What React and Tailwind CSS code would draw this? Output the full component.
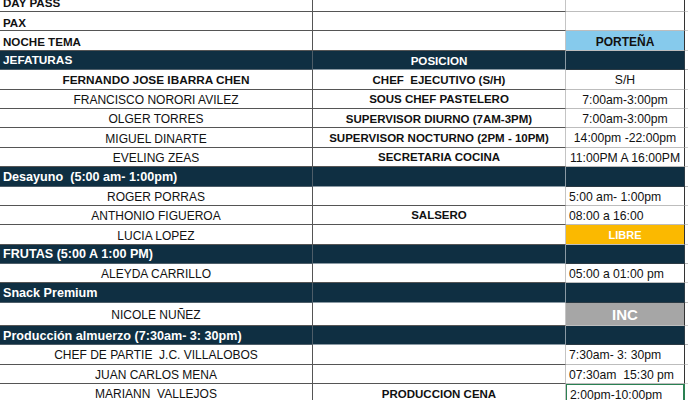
import React from 'react'

const rows = [
  { kind: 'label', a: 'DAY PASS' },
  { kind: 'label', a: 'PAX' },
  { kind: 'label', a: 'NOCHE TEMA', c: 'PORTEÑA', tone: 'sky' },
  { kind: 'band', a: 'JEFATURAS', b: 'POSICION', caps: true },
  { a: 'FERNANDO JOSE IBARRA CHEN', strong: true, b: 'CHEF  EJECUTIVO (S/H)', c: 'S/H', center: true },
  { a: 'FRANCISCO NORORI AVILEZ', b: 'SOUS CHEF PASTELERO', c: '7:00am-3:00pm', center: true },
  { a: 'OLGER TORRES', b: 'SUPERVISOR DIURNO (7AM-3PM)', c: '7:00am-3:00pm', center: true },
  { a: 'MIGUEL DINARTE', b: 'SUPERVISOR NOCTURNO (2PM - 10PM)', c: '14:00pm -22:00pm', center: true },
  { a: 'EVELING ZEAS', b: 'SECRETARIA COCINA', c: '11:00PM A 16:00PM', center: true },
  { kind: 'band', a: 'Desayuno  (5:00 am- 1:00pm)' },
  { a: 'ROGER PORRAS', c: '5:00 am- 1:00pm' },
  { a: 'ANTHONIO FIGUEROA', b: 'SALSERO', c: '08:00 a 16:00' },
  { a: 'LUCIA LOPEZ', c: 'LIBRE', tone: 'gold' },
  { kind: 'band', a: 'FRUTAS (5:00 A 1:00 PM)' },
  { a: 'ALEYDA CARRILLO', c: '05:00 a 01:00 pm' },
  { kind: 'band', a: 'Snack Premium' },
  { a: 'NICOLE NUÑEZ', c: 'INC', tone: 'gray', tall: true },
  { kind: 'band', a: 'Producción almuerzo (7:30am- 3: 30pm)' },
  { a: 'CHEF DE PARTIE  J.C. VILLALOBOS', c: '7:30am- 3: 30pm' },
  { a: 'JUAN CARLOS MENA', c: '07:30am  15:30 pm' },
  { a: 'MARIANN  VALLEJOS', b: 'PRODUCCION CENA', c: '2:00pm-10:00pm', selected: true },
]

function Row({ row }) {
  const h = row.tall ? 'h-[23px]' : 'h-[19.4px]'

  if (row.kind === 'band') {
    return (
      <div className={`flex ${h} bg-[#0f2f42] text-white font-bold`}>
        <div
          className={`flex w-[313px] shrink-0 items-center border-r border-b border-[#4d5d68] pl-[3px] pt-[2px] whitespace-pre ${
            row.caps ? 'text-[11.8px]' : 'text-[12.6px]'
          }`}
        >
          {row.a}
        </div>
        <div className="flex w-[253px] shrink-0 items-center justify-center border-r border-b border-[#8a99a3] pt-[2px] text-[11.6px]">
          {row.b}
        </div>
        <div className="w-[119px] shrink-0 border-r border-b border-[#2b3a44]" />
        <div className="flex-1 bg-white border-b border-[#bbb]" />
      </div>
    )
  }

  let third = 'text-[12.2px] text-[#111]'
  let thirdAlign = row.center ? 'justify-center' : 'justify-start pl-[3px]'
  if (row.tone === 'sky') {
    third = 'bg-[#86caec] font-bold text-[12px] text-[#111]'
    thirdAlign = 'justify-center'
  }
  if (row.tone === 'gold') {
    third = 'bg-[#fbb900] font-bold text-[11px] text-white'
    thirdAlign = 'justify-center'
  }
  if (row.tone === 'gray') {
    third = 'bg-[#a6a6a6] font-bold text-[15px] text-white'
    thirdAlign = 'justify-center'
  }
  const sel = row.selected
    ? 'border-l border-t border-r-2 border-[#2a8052]'
    : 'border-r border-b border-r-[#333] border-b-[#bdbdbd]'

  return (
    <div className={`flex ${h} bg-white text-[#111]`}>
      {row.kind === 'label' ? (
        <div className="flex w-[313px] shrink-0 items-center border-r border-b border-r-[#555] border-b-[#555] pl-[3px] pt-[2px] text-[11.6px] font-bold">
          {row.a}
        </div>
      ) : (
        <div
          className={`flex w-[313px] shrink-0 items-center justify-center border-r border-b border-r-[#555] border-b-[#555] pt-[2px] whitespace-pre ${
            row.strong ? 'text-[11.8px] font-bold' : 'text-[12px]'
          }`}
        >
          {row.a}
        </div>
      )}
      <div className="flex w-[253px] shrink-0 items-center justify-center border-r border-b border-r-[#c4c4c4] border-b-[#555] pt-[2px] text-[11.5px] font-bold whitespace-pre">
        {row.b}
      </div>
      <div className={`flex w-[119px] shrink-0 items-center pt-[2px] whitespace-pre ${sel} ${third} ${thirdAlign}`}>
        {row.c}
      </div>
      <div className="flex-1 border-b border-[#d0d0d0]" />
    </div>
  )
}

export default function App() {
  return (
    <div
      className="h-[400px] w-[688px] overflow-hidden bg-white"
      style={{ fontFamily: '"Liberation Sans", Arial, sans-serif' }}
    >
      <div className="mt-[-7.4px]">
        {rows.map((row, i) => (
          <Row key={i} row={row} />
        ))}
      </div>
    </div>
  )
}
